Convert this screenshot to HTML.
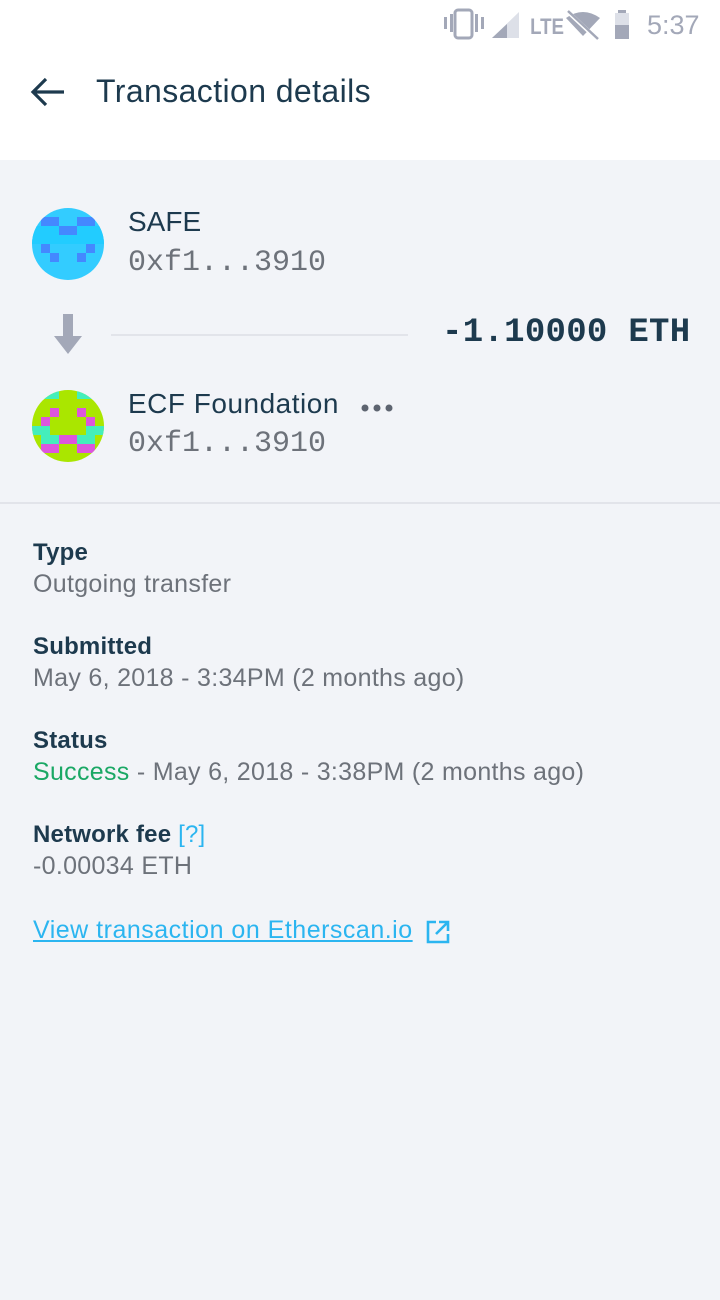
<!DOCTYPE html>
<html><head><meta charset="utf-8"><style>
*{margin:0;padding:0;box-sizing:border-box}
body{width:720px;height:1300px;background:#f2f4f8;font-family:"Liberation Sans",sans-serif;position:relative;overflow:hidden}
.hdr{position:absolute;left:0;top:0;width:720px;height:160px;background:#fff}
.abs{position:absolute;white-space:nowrap}
.dark{color:#1d3a4e}
.gray{color:#6d727a}
.mono{font-family:"Liberation Mono",monospace}
.lbl{font-size:24px;font-weight:bold;color:#1d3a4e;letter-spacing:0.2px}
.val{font-size:25px;color:#6d727a;letter-spacing:0.3px}
</style></head><body>
<div class="hdr"></div>
<!-- status bar -->
<svg class="abs" style="left:440px;top:6px" width="280" height="38" viewBox="0 0 280 38">
<g fill="#a3a8b8">
<rect x="4" y="11" width="3" height="12"/><rect x="10" y="8" width="3" height="18"/>
<rect x="15" y="4" width="17" height="28" rx="3" fill="none" stroke="#a3a8b8" stroke-width="3"/>
<rect x="35" y="8" width="3" height="18"/><rect x="41" y="11" width="3" height="12"/>
<polygon points="52,32 79,6 79,32" fill="#dde0e8"/><polygon points="52,32 67,18 67,32"/>
<text x="90" y="28" font-family="Liberation Sans" font-size="22" font-weight="bold" fill="#a3a8b8" transform="scale(0.85,1) translate(16,0)">LTE</text>
<path d="M126 12 Q143 0 160 12 L143 30 Z"/>
<path d="M128 6 L158 34" stroke="#fff" stroke-width="4"/><path d="M128 5 L158 33" stroke="#a3a8b8" stroke-width="2.5"/>
<rect x="178" y="4" width="8" height="4"/><rect x="175" y="7" width="14" height="26" fill="#dde0e8"/><rect x="175" y="19" width="14" height="14"/>
</g>
<text x="207" y="28" font-family="Liberation Sans" font-size="27" fill="#a3a8b8">5:37</text>
</svg>
<!-- back arrow -->
<svg class="abs" style="left:30px;top:76px" width="36" height="32" viewBox="0 0 36 32"><path d="M34 16H4M16 3L3 16l13 13" stroke="#1d3a4e" stroke-width="3.2" fill="none"/></svg>
<div class="abs dark" style="left:96px;top:73px;font-size:32px;letter-spacing:0.4px">Transaction details</div>

<!-- avatar 1 -->
<svg class="abs" style="left:32px;top:208px" width="72" height="72" viewBox="0 0 8 8">
<defs><clipPath id="c"><circle cx="4" cy="4" r="4"/></clipPath></defs>
<g clip-path="url(#c)" shape-rendering="crispEdges">
<rect width="8" height="8" fill="#33ccff"/>
<rect x="0" y="2" width="8" height="2" fill="#22ccff"/>
<g fill="#4488ff"><rect x="1" y="1" width="2" height="1"/><rect x="5" y="1" width="2" height="1"/><rect x="3" y="2" width="2" height="1"/><rect x="1" y="4" width="1" height="1"/><rect x="6" y="4" width="1" height="1"/><rect x="2" y="5" width="1" height="1"/><rect x="5" y="5" width="1" height="1"/></g>
</g></svg>
<div class="abs dark" style="left:128px;top:206px;font-size:28px">SAFE</div>
<div class="abs mono gray" style="left:128px;top:246px;font-size:30px">0xf1...3910</div>

<svg class="abs" style="left:54px;top:314px" width="28" height="42" viewBox="0 0 28 42"><rect x="9" y="0" width="10" height="22" fill="#a3a8b8"/><polygon points="0,22 28,22 14,40" fill="#a3a8b8"/></svg>
<div class="abs" style="left:111px;top:334px;width:297px;height:2px;background:#e2e4ea"></div>
<div class="abs mono dark" style="left:442px;top:314px;font-size:34px;font-weight:bold;letter-spacing:0.3px">-1.10000 ETH</div>

<!-- avatar 2 -->
<svg class="abs" style="left:32px;top:390px" width="72" height="72" viewBox="0 0 8 8">
<defs><clipPath id="d"><circle cx="4" cy="4" r="4"/></clipPath></defs>
<g clip-path="url(#d)" shape-rendering="crispEdges">
<rect width="8" height="8" fill="#aae600"/>
<g fill="#44eebb"><rect x="0" y="0" width="3" height="1"/><rect x="5" y="0" width="3" height="1"/><rect x="0" y="4" width="2" height="1"/><rect x="6" y="4" width="2" height="1"/><rect x="1" y="5" width="2" height="1"/><rect x="5" y="5" width="2" height="1"/></g>
<g fill="#dd55dd"><rect x="2" y="2" width="1" height="1"/><rect x="5" y="2" width="1" height="1"/><rect x="1" y="3" width="1" height="1"/><rect x="6" y="3" width="1" height="1"/><rect x="3" y="5" width="2" height="1"/><rect x="1" y="6" width="2" height="1"/><rect x="5" y="6" width="2" height="1"/></g>
</g></svg>
<div class="abs dark" style="left:128px;top:388px;font-size:28px;letter-spacing:0.5px">ECF Foundation</div>
<svg class="abs" style="left:360px;top:402px" width="34" height="12"><circle cx="5" cy="6" r="3.5" fill="#5d6470"/><circle cx="17" cy="6" r="3.5" fill="#5d6470"/><circle cx="29" cy="6" r="3.5" fill="#5d6470"/></svg>
<div class="abs mono gray" style="left:128px;top:427px;font-size:30px">0xf1...3910</div>

<div class="abs" style="left:0;top:502px;width:720px;height:2px;background:#e2e4ea"></div>

<div class="abs lbl" style="left:33px;top:539px">Type</div>
<div class="abs val" style="left:33px;top:570px">Outgoing transfer</div>
<div class="abs lbl" style="left:33px;top:633px">Submitted</div>
<div class="abs val" style="left:33px;top:664px">May 6, 2018 - 3:34PM (2 months ago)</div>
<div class="abs lbl" style="left:33px;top:727px">Status</div>
<div class="abs val" style="left:33px;top:758px"><span style="color:#1aa865">Success</span> - May 6, 2018 - 3:38PM (2 months ago)</div>
<div class="abs lbl" style="left:33px;top:821px">Network fee <span style="color:#2bb5f0;font-weight:normal">[?]</span></div>
<div class="abs val" style="left:33px;top:852px">-0.00034 ETH</div>
<div class="abs" style="left:33px;top:916px;font-size:25px;letter-spacing:0.5px;color:#2bb5f0;text-decoration:underline">View transaction on Etherscan.io</div>
<svg class="abs" style="left:425px;top:919px" width="26" height="26" viewBox="0 0 26 26"><path d="M11 3H3v20h20v-8M14 3h9v9M23 3L11 15" stroke="#2bb5f0" stroke-width="2.6" fill="none"/></svg>
</body></html>
